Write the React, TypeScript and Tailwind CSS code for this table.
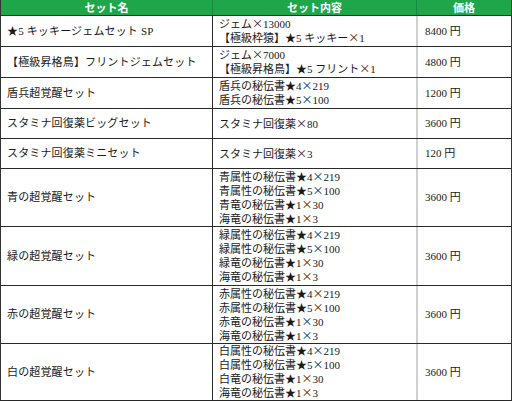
const rows: { name: string; items: string[]; price: string; h: string }[] = [
  { name: '★5 キッキージェムセット SP', items: ['ジェム×13000', '【極級枠猿】★5 キッキー×1'], price: '8400 円', h: 'h-[31px]' },
  { name: '【極級昇格鳥】フリントジェムセット', items: ['ジェム×7000', '【極級昇格鳥】★5 フリント×1'], price: '4800 円', h: 'h-[31px]' },
  { name: '盾兵超覚醒セット', items: ['盾兵の秘伝書★4×219', '盾兵の秘伝書★5×100'], price: '1200 円', h: 'h-[31px]' },
  { name: 'スタミナ回復薬ビッグセット', items: ['スタミナ回復薬×80'], price: '3600 円', h: 'h-[30px]' },
  { name: 'スタミナ回復薬ミニセット', items: ['スタミナ回復薬×3'], price: '120 円', h: 'h-[30px]' },
  {
    name: '青の超覚醒セット',
    items: ['青属性の秘伝書★4×219', '青属性の秘伝書★5×100', '青竜の秘伝書★1×30', '海竜の秘伝書★1×3'],
    price: '3600 円',
    h: 'h-[58px]',
  },
  {
    name: '緑の超覚醒セット',
    items: ['緑属性の秘伝書★4×219', '緑属性の秘伝書★5×100', '緑竜の秘伝書★1×30', '海竜の秘伝書★1×3'],
    price: '3600 円',
    h: 'h-[59px]',
  },
  {
    name: '赤の超覚醒セット',
    items: ['赤属性の秘伝書★4×219', '赤属性の秘伝書★5×100', '赤竜の秘伝書★1×30', '海竜の秘伝書★1×3'],
    price: '3600 円',
    h: 'h-[58px]',
  },
  {
    name: '白の超覚醒セット',
    items: ['白属性の秘伝書★4×219', '白属性の秘伝書★5×100', '白竜の秘伝書★1×30', '海竜の秘伝書★1×3'],
    price: '3600 円',
    h: 'h-[57px]',
  },
];

const cjk = '"Noto Sans CJK JP", sans-serif';

// the × sign is full width in the original, so give it the CJK font
function Item({ text }: { text: string }) {
  const parts = text.split('×');
  return (
    <div className="h-[14px] leading-[14px]">
      {parts.map((p, i) => (
        <span key={i}>
          {i > 0 && (
            <span className="leading-none" style={{ fontFamily: cjk }}>
              ×
            </span>
          )}
          {p}
        </span>
      ))}
    </div>
  );
}

export default function App() {
  return (
    <div
      className="w-[512px] h-[402px] bg-white text-[11px] text-[#1a1a1a]"
      style={{ fontFamily: '"Liberation Serif", "Noto Sans CJK JP", serif' }}
    >
      <div className="w-[512px] border-l border-r border-[#333]">
        {/* header */}
        <div
          className="grid grid-cols-[211px_204px_95px] h-[16px] bg-[#1fa64b] border-b border-[#2a2a2a] text-white font-semibold leading-[15px]"
          style={{ fontFamily: cjk }}
        >
          <div className="text-center">セット名</div>
          <div className="text-center border-l border-[#178a3b]">セット内容</div>
          <div className="text-center border-l border-[#178a3b]">価格</div>
        </div>

        {rows.map((r) => (
          <div key={r.name} className={`grid grid-cols-[211px_204px_95px] border-b border-[#2a2a2a] ${r.h}`}>
            <div className="flex items-center pl-[6px] tracking-[0.15px] whitespace-nowrap">{r.name}</div>
            <div className="flex flex-col justify-center pl-[6px] border-l border-[#2a2a2a] whitespace-nowrap">
              {r.items.map((it) => (
                <Item key={it} text={it} />
              ))}
            </div>
            <div className="flex items-center pl-[7px] border-l-2 border-[#d0d0d0]">{r.price}</div>
          </div>
        ))}
      </div>
    </div>
  );
}
